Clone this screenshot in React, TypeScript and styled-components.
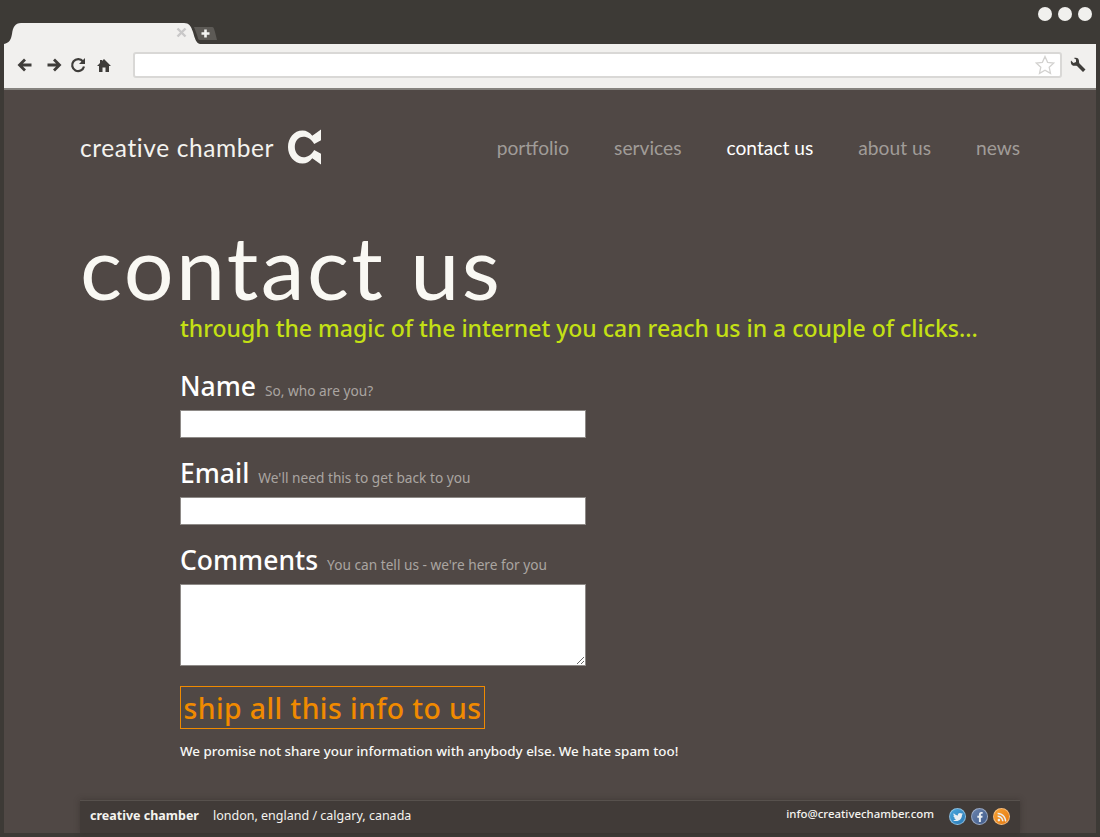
import React from 'react';
import styled, { createGlobalStyle } from 'styled-components';
import { FaTwitter, FaFacebookF, FaRss } from 'react-icons/fa';

const GlobalStyle = createGlobalStyle`
  html, body {
    margin: 0;
    padding: 0;
    background: #3d3a36;
    overflow: hidden;
  }
  * {
    box-sizing: border-box;
  }
`;

const body = `"Noto Sans", "Liberation Sans", sans-serif`;
const display = `Lato, "Open Sans", sans-serif`;

const Frame = styled.div`
  width: 1100px;
  height: 837px;
  display: flex;
  flex-direction: column;
  padding: 0 4px 4px;
  background: #3d3a36;
  overflow: hidden;
`;

const TitleBar = styled.div`
  height: 44px;
  flex: none;
  display: flex;
  align-items: flex-end;
  justify-content: space-between;
`;

const TabStrip = styled.div`
  display: flex;
  align-items: flex-end;
`;

const Tab = styled.div`
  position: relative;
  width: 196px;
  height: 21px;
  display: flex;
  justify-content: flex-end;
  align-items: center;
  padding: 0 13px 2px 0;
`;

const TabShape = styled.svg`
  position: absolute;
  left: 0;
  top: 0;
`;

const TabClose = styled.svg`
  position: relative;
  margin-bottom: 1px;
`;

const NewTab = styled.div`
  width: 24px;
  height: 18px;
  margin: 0 0 0 -6px;
  position: relative;
`;

const WindowDots = styled.div`
  display: flex;
  gap: 6px;
  align-self: flex-start;
  margin: 7px 4px 0 0;
`;

const Dot = styled.span`
  width: 14px;
  height: 14px;
  border-radius: 50%;
  background: #f1f0ee;
`;

const Toolbar = styled.div`
  height: 46px;
  flex: none;
  display: flex;
  align-items: center;
  padding: 0 10px 2px 13px;
  background: #f1f0ee;
  border-bottom: 2px solid #86837f;
`;

const NavIcons = styled.div`
  display: flex;
  align-items: center;
  width: 116px;
  flex: none;
`;

const ToolIcon = styled.svg<{ $gap?: number }>`
  flex: none;
  margin-right: ${p => p.$gap ?? 0}px;
`;

const Omnibox = styled.div`
  flex: 1;
  height: 26px;
  margin-right: 8px;
  display: flex;
  align-items: center;
  justify-content: flex-end;
  padding-right: 5px;
  background: #fff;
  border: 2px solid #d9d8d6;
  border-radius: 3px;
`;

const Page = styled.main`
  flex: 1;
  display: flex;
  flex-direction: column;
  padding: 0 76px;
  background: #504845;
  min-height: 0;
`;

const Header = styled.header`
  height: 114px;
  flex: none;
  display: flex;
  align-items: center;
  justify-content: space-between;
`;

const Logo = styled.div`
  display: flex;
  align-items: center;
  gap: 14px;
  font-family: ${display};
  font-size: 24.5px;
  letter-spacing: 0.6px;
  color: #f4f3ef;
`;

const Nav = styled.nav`
  display: flex;
  gap: 45px;
`;

const NavItem = styled.a<{ $active?: boolean }>`
  font-family: ${display};
  font-size: 19.2px;
  color: ${p => (p.$active ? '#ffffff' : '#a09c98')};
`;

const Title = styled.h1`
  margin: 23px 0 0;
  font-family: ${display};
  font-weight: 400;
  font-size: 88px;
  line-height: 78px;
  letter-spacing: 2.4px;
  color: #f9f8f3;
  white-space: nowrap;
`;

const Content = styled.section`
  padding-left: 100px;
  flex: 1;
  display: flex;
  flex-direction: column;
`;

const Lead = styled.p`
  margin: 8px 0 0;
  font-family: ${body};
  font-size: 23px;
  font-weight: 500;
  line-height: 30px;
  letter-spacing: 0;
  color: #c4e014;
  white-space: nowrap;
`;

const Fields = styled.div`
  display: flex;
  flex-direction: column;
  margin-top: 24px;
`;

const Field = styled.div`
  display: flex;
  flex-direction: column;
`;

const LabelRow = styled.div`
  display: flex;
  align-items: baseline;
  gap: 9px;
  height: 43px;
  padding-top: 1px;
`;

const Label = styled.label`
  font-family: ${body};
  font-size: 26.5px;
  font-weight: 500;
  line-height: 37px;
  color: #fff;
`;

const Hint = styled.span`
  font-family: ${body};
  font-size: 13.7px;
  color: #aaa5a1;
`;

const TextInput = styled.input`
  display: block;
  width: 406px;
  height: 28px;
  margin-bottom: 16px;
  padding: 0 4px;
  background: #fff;
  border: 1px solid #8e8a87;
  border-radius: 0;
  outline: none;
`;

const TextArea = styled.textarea`
  display: block;
  width: 406px;
  height: 82px;
  margin: 0;
  padding: 4px;
  background: #fff;
  border: 1px solid #8e8a87;
  border-radius: 0;
  outline: none;
`;

const Submit = styled.button`
  align-self: flex-start;
  width: 305px;
  height: 43px;
  margin-top: 20px;
  padding: 0;
  background: transparent;
  border: 1px solid #f08a00;
  font-family: ${body};
  font-size: 28.4px;
  font-weight: 500;
  line-height: 40px;
  letter-spacing: 0.4px;
  color: #f08a00;
  white-space: nowrap;
`;

const PromiseNote = styled.p`
  margin: 13px 0 0;
  font-family: ${body};
  font-size: 13.4px;
  font-weight: 500;
  line-height: 18px;
  color: #f8f8f5;
`;

const Footer = styled.footer`
  height: 33px;
  flex: none;
  display: flex;
  align-items: center;
  justify-content: space-between;
  padding: 0 10px 3px 10px;
  background: #413b38;
  border-top: 1px solid #57514d;
  box-shadow: 0 0 6px rgba(40, 36, 33, 0.4);
`;

const FooterLeft = styled.div`
  display: flex;
  gap: 14px;
  font-family: ${body};
  font-size: 12.5px;
  color: #f4f3ef;
`;

const FooterStrong = styled.strong`
  font-weight: 700;
`;

const FooterRight = styled.div`
  display: flex;
  align-items: center;
  gap: 15px;
`;

const Email = styled.a`
  font-family: ${body};
  font-size: 11.4px;
  font-weight: 500;
  color: #f4f3ef;
  margin-top: -4px;
`;

const Socials = styled.div`
  display: flex;
  gap: 5px;
  margin-top: 2px;
`;

const Social = styled.span<{ $from: string; $to: string }>`
  width: 17px;
  height: 17px;
  display: flex;
  align-items: center;
  justify-content: center;
  border-radius: 50%;
  background: linear-gradient(135deg, ${p => p.$from}, ${p => p.$to});
  border: 1px solid rgba(255, 255, 255, 0.4);
  color: #e9eef2;
  font-size: 10px;
`;

const App = () => {
  return (
    <Frame>
      <GlobalStyle />
      <TitleBar>
        <TabStrip>
          <Tab>
            <TabShape width="196" height="21" viewBox="0 0 196 21">
              <path
                d="M0 21 C5 20 7 17 8 11 C9 4 11 0 17 0 L180 0 C185 0 187 3 189 9 C191 16 192 20 196 21 Z"
                fill="#f1f0ee"
              />
            </TabShape>
            <TabClose width="11" height="11" viewBox="0 0 11 11">
              <path d="M1.5 1.5 L9.5 9.5 M9.5 1.5 L1.5 9.5" stroke="#c9c8c8" strokeWidth="2.4" />
            </TabClose>
          </Tab>
          <NewTab>
            <svg width="24" height="18" viewBox="0 0 24 18">
              <path d="M0 1 L18 1 C20 1 20 3 21 6 L23 14 L6 14 C4 14 4 12 3 9 Z" fill="#5d5a56" />
              <path d="M11.5 3.5 V11.5 M7.5 7.5 H15.5" stroke="#f4f4f2" strokeWidth="2.6" />
            </svg>
          </NewTab>
        </TabStrip>
        <WindowDots>
          <Dot />
          <Dot />
          <Dot />
        </WindowDots>
      </TitleBar>
      <Toolbar>
        <NavIcons>
          <ToolIcon $gap={13} width="16" height="16" viewBox="0 0 16 16">
            <path d="M14.5 8 H3 M8 2.5 L2.5 8 L8 13.5" fill="none" stroke="#3f3d3a" strokeWidth="2.8" />
          </ToolIcon>
          <ToolIcon $gap={8} width="16" height="16" viewBox="0 0 16 16">
            <path d="M1.5 8 H13 M8 2.5 L13.5 8 L8 13.5" fill="none" stroke="#3f3d3a" strokeWidth="2.8" />
          </ToolIcon>
          <ToolIcon $gap={11} width="16" height="16" viewBox="0 0 16 16">
            <path d="M13 4.5 A6 6 0 1 0 14 9.5" fill="none" stroke="#3f3d3a" strokeWidth="2.2" />
            <path d="M15 1 V7 H9 Z" fill="#3f3d3a" />
          </ToolIcon>
          <ToolIcon width="14" height="15" viewBox="0 0 14 15">
            <path d="M7 1 L14 8 H12 V14 H8.5 V9.5 H5.5 V14 H2 V8 H0 L3 5 V2 H5 V3 Z" fill="#3f3d3a" />
          </ToolIcon>
        </NavIcons>
        <Omnibox>
          <svg width="20" height="20" viewBox="0 0 20 20">
            <path
              d="M10 1.5 L12.6 7.3 L18.8 8 L14.2 12.2 L15.5 18.4 L10 15.2 L4.5 18.4 L5.8 12.2 L1.2 8 L7.4 7.3 Z"
              fill="#fff"
              stroke="#d3d2d0"
              strokeWidth="1.3"
            />
          </svg>
        </Omnibox>
        <svg width="16" height="16" viewBox="0 0 16 16">
          <path
            d="M1 3.5 L3.5 6 L6 5 L6 2.5 L3.8 1 C6.5 0 9 1 9 4 C9 5 9 5.5 9.5 6.5 L15.5 12.5 L13 15 L7 9 C6 8.5 5 8.8 4 8.8 C1.5 8.8 0.4 6.2 1 3.5 Z"
            fill="#3f3d3a"
          />
        </svg>
      </Toolbar>
      <Page>
        <Header>
          <Logo>
            creative chamber
            <svg width="33" height="36" viewBox="0 0 34 36">
              <path
                d="M34 0 V11 L27 15 C24 10 20 7.5 16 7.5 C10.5 7.5 7 12.5 7 18 C7 23.5 10.5 28.5 16 28.5 C20 28.5 24 26 27 21 L34 25 V36 L25 29.5 C22.5 33 19 35 15 35 C6 35 0 27 0 18 C0 9 6 1 15 1 C19 1 22.5 3 25 6.5 Z"
                fill="#f6f5f1"
              />
            </svg>
          </Logo>
          <Nav>
            <NavItem>portfolio</NavItem>
            <NavItem>services</NavItem>
            <NavItem $active>contact us</NavItem>
            <NavItem>about us</NavItem>
            <NavItem>news</NavItem>
          </Nav>
        </Header>
        <Title>contact us</Title>
        <Content>
          <Lead>through the magic of the internet you can reach us in a couple of clicks...</Lead>
          <Fields>
            <Field>
              <LabelRow>
                <Label>Name</Label>
                <Hint>So, who are you?</Hint>
              </LabelRow>
              <TextInput />
            </Field>
            <Field>
              <LabelRow>
                <Label>Email</Label>
                <Hint>We'll need this to get back to you</Hint>
              </LabelRow>
              <TextInput />
            </Field>
            <Field>
              <LabelRow>
                <Label>Comments</Label>
                <Hint>You can tell us - we're here for you</Hint>
              </LabelRow>
              <TextArea />
            </Field>
          </Fields>
          <Submit>ship all this info to us</Submit>
          <PromiseNote>We promise not share your information with anybody else. We hate spam too!</PromiseNote>
        </Content>
        <Footer>
          <FooterLeft>
            <FooterStrong>creative chamber</FooterStrong>
            <span>london, england / calgary, canada</span>
          </FooterLeft>
          <FooterRight>
            <Email>info@creativechamber.com</Email>
            <Socials>
              <Social $from="#4aa6dc" $to="#2a78b4">
                <FaTwitter />
              </Social>
              <Social $from="#6a83ad" $to="#3f5a8a">
                <FaFacebookF />
              </Social>
              <Social $from="#f6a032" $to="#e57a12">
                <FaRss />
              </Social>
            </Socials>
          </FooterRight>
        </Footer>
      </Page>
    </Frame>
  );
};

export default App;
